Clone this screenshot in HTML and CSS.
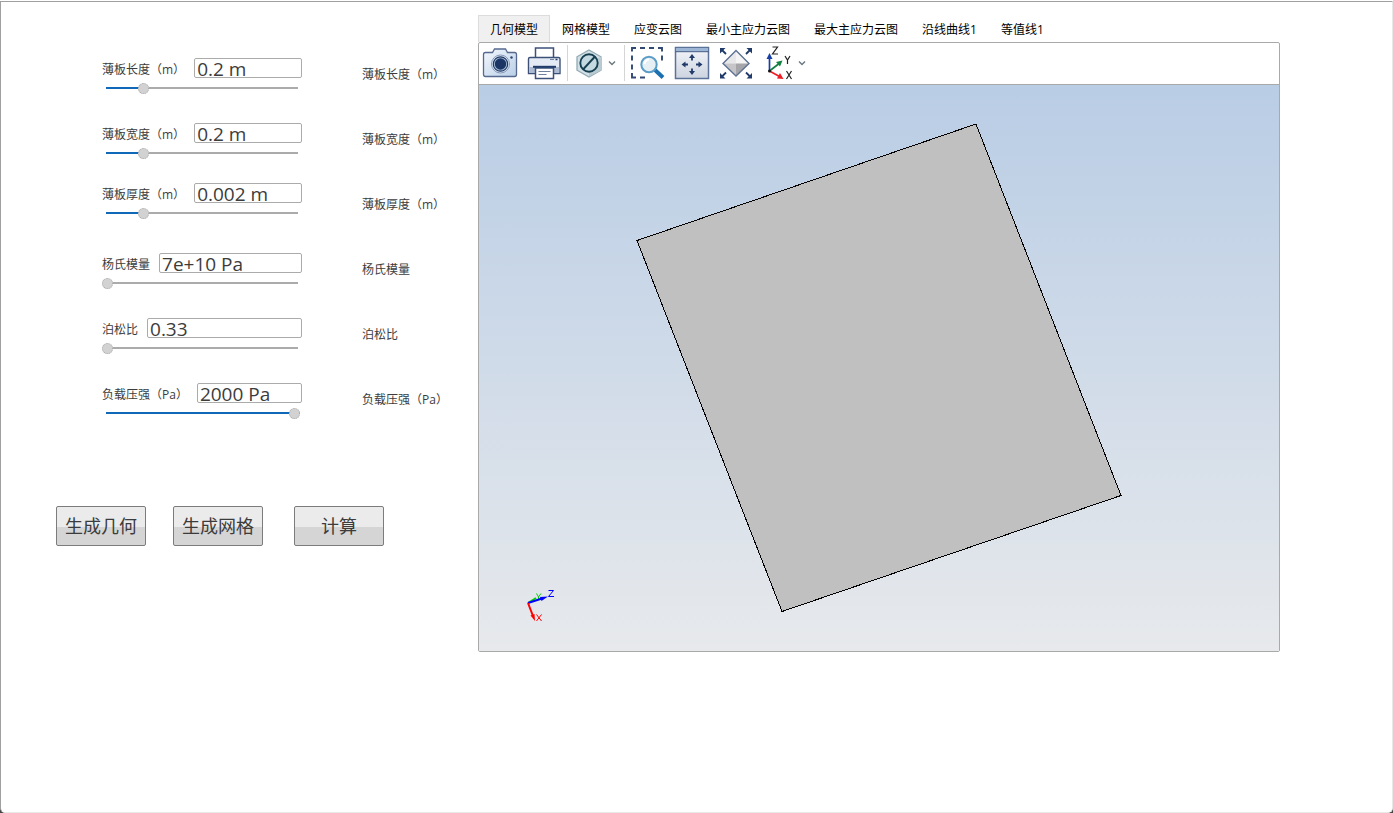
FILE: index.html
```html
<!DOCTYPE html>
<html lang="zh-CN">
<head>
<meta charset="utf-8">
<title>薄板分析</title>
<link rel="stylesheet" href="styles.css">
</head>
<body>
<main class="window">
  <section class="side">
    <form class="params">
      <div class="fields">
        <div class="field">
          <div class="entry"><label for="length">薄板长度（m）</label><input class="value" id="length" type="text" value="0.2 m"></div>
          <input class="slider" type="range" aria-label="薄板长度" value="19" style="--fill:19%">
        </div>
        <div class="field">
          <div class="entry"><label for="width">薄板宽度（m）</label><input class="value" id="width" type="text" value="0.2 m"></div>
          <input class="slider" type="range" aria-label="薄板宽度" value="19" style="--fill:19%">
        </div>
        <div class="field field-last">
          <div class="entry"><label for="thickness">薄板厚度（m）</label><input class="value" id="thickness" type="text" value="0.002 m"></div>
          <input class="slider" type="range" aria-label="薄板厚度" value="19" style="--fill:19%">
        </div>
        <div class="field">
          <div class="entry"><label for="modulus">杨氏模量</label><input class="value" id="modulus" type="text" value="7e+10 Pa"></div>
          <input class="slider" type="range" aria-label="杨氏模量" value="0" style="--fill:0%">
        </div>
        <div class="field">
          <div class="entry"><label for="poisson">泊松比</label><input class="value" id="poisson" type="text" value="0.33"></div>
          <input class="slider" type="range" aria-label="泊松比" value="0" style="--fill:0%">
        </div>
        <div class="field">
          <div class="entry"><label for="pressure">负载压强（Pa）</label><input class="value" id="pressure" type="text" value="2000 Pa"></div>
          <input class="slider" type="range" aria-label="负载压强" value="100" style="--fill:100%">
        </div>
      </div>
      <ul class="names">
        <li>薄板长度（m）</li>
        <li>薄板宽度（m）</li>
        <li>薄板厚度（m）</li>
        <li>杨氏模量</li>
        <li>泊松比</li>
        <li>负载压强（Pa）</li>
      </ul>
    </form>
    <div class="actions">
      <button class="action" type="button">生成几何</button>
      <button class="action" type="button">生成网格</button>
      <button class="action action-run" type="button">计算</button>
    </div>
  </section>

  <section class="viewer">
    <div class="tabs" role="tablist">
      <button class="tab tab-active" type="button" role="tab" aria-selected="true">几何模型</button>
      <button class="tab" type="button" role="tab">网格模型</button>
      <button class="tab" type="button" role="tab">应变云图</button>
      <button class="tab" type="button" role="tab">最小主应力云图</button>
      <button class="tab" type="button" role="tab">最大主应力云图</button>
      <button class="tab" type="button" role="tab">沿线曲线1</button>
      <button class="tab" type="button" role="tab">等值线1</button>
    </div>
    <div class="pane">
      <div class="toolbar">
        <div class="group group-output">
          <button class="tool" type="button" aria-label="截图">
            <svg class="icon" viewBox="0 0 36 36">
              <defs><linearGradient id="cam" x1="0" y1="0" x2="1" y2="1"><stop offset="0" stop-color="#f4f8fd"/><stop offset="1" stop-color="#b9cfe8"/></linearGradient></defs>
              <path d="M3.500 7.500h7l2-3.500h11l2 3.500h7q2 0 2 2v20q0 2-2 2h-29q-2 0-2-2v-20q0-2 2-2z" fill="url(#cam)" stroke="#56698f" stroke-width="1.300"/>
              <circle cx="18.500" cy="19" r="9" fill="#e5eef8" stroke="#8295b5"/>
              <circle cx="18.500" cy="19" r="7.200" fill="#a9c0dc" stroke="#1d3763" stroke-width="1.200"/>
              <circle cx="18.500" cy="19" r="5.700" fill="#1b3564"/>
              <circle cx="29.500" cy="12.500" r="1.200" fill="#2a4474"/>
            </svg>
          </button>
          <button class="tool" type="button" aria-label="打印">
            <svg class="icon" viewBox="0 0 36 36">
              <path d="M9.500 13V3h18v10" fill="#fff" stroke="#3c5078" stroke-width="1.500"/>
              <path d="M4 12.500h28.500q1.500 0 1.500 1.500v14.500H2.500V14q0-1.500 1.500-1.500z" fill="#e5ebf4" stroke="#3c5078" stroke-width="1.400"/>
              <path d="M3.200 22h30v6h-30z" fill="#aebcd3"/>
              <path d="M9.500 23h18v10.500h-18z" fill="#fff" stroke="#3c5078" stroke-width="1.500"/>
              <path d="M7 21.800h23" stroke="#203c6b" stroke-width="2"/>
              <path d="M12.500 26.500h12M12.500 29.500h8M24 14.500h4" stroke="#6f80a0" stroke-width="1.200"/>
              <path d="M29.500 14.500h2" stroke="#203c6b" stroke-width="1.500"/>
            </svg>
          </button>
        </div>
        <div class="group group-display">
          <button class="tool" type="button" aria-label="显示方式">
            <svg class="icon" viewBox="0 0 36 36">
              <path d="M18 5l12 6.800v13.400L18 32 6 25.200V11.800z" fill="#d3e0e5" stroke="#91aab4" stroke-width="1.300"/>
              <path d="M18 31.500V18.500l12-6.700v13.400z" fill="#b9cbd2"/>
              <circle cx="18" cy="18" r="8.700" fill="#c5dae0" stroke="#173f52" stroke-width="1.900"/>
              <path d="M12 24.500l12-13" stroke="#173f52" stroke-width="1.900"/>
            </svg>
            <svg class="chevron" viewBox="0 0 8 8"><path d="M1 2.500l3 3 3-3" fill="none" stroke="#6c7a80" stroke-width="1.500"/></svg>
          </button>
        </div>
        <div class="group">
          <button class="tool" type="button" aria-label="框选缩放">
            <svg class="icon" viewBox="0 0 36 36">
              <path d="M2 6.500V3h4M10 3h5M19 3h5M28 3h4v3.500M2 10.500v5M2 19.500v5M2 28v4.500h4M10 32.500h5M32 10.500v5" fill="none" stroke="#304873" stroke-width="1.900"/>
              <path d="M25 25l8 7.500" stroke="#1b70b0" stroke-width="4"/>
              <circle cx="19" cy="19.500" r="7.700" fill="#e6eff4" stroke="#5b9dc6" stroke-width="2"/>
              <path d="M14.500 19q.500-4 4.500-4.500" fill="none" stroke="#fff" stroke-width="2"/>
            </svg>
          </button>
          <button class="tool" type="button" aria-label="平移">
            <svg class="icon" viewBox="0 0 36 36">
              <defs><linearGradient id="pan" x1="0" y1="0" x2="0" y2="1"><stop offset="0" stop-color="#f3f5f9"/><stop offset="1" stop-color="#cdd4e0"/></linearGradient></defs>
              <path d="M1.500 2.500h33v31h-33z" fill="url(#pan)" stroke="#5c7399" stroke-width="1.500"/>
              <path d="M2 3h32v3.200H2z" fill="#9db6d6"/><path d="M1.500 6.700h33" stroke="#3e5782"/>
              <path d="M18 15.500V12M18 23.500v4M14 19.500h-4M22 19.500h4" stroke="#213b6a" stroke-width="1.800"/>
              <path d="M18 9l3 4h-6zM18 30l3-4h-6zM7.500 19.500l4-3v6zM28.500 19.500l-4-3v6z" fill="#213b6a"/>
            </svg>
          </button>
          <button class="tool" type="button" aria-label="适合窗口">
            <svg class="icon" viewBox="0 0 36 36">
              <path d="M18 5.500L31 18.500l-13 12-13-12z" fill="#f5f5f5"/>
              <path d="M18 5.500v13H5z" fill="#e8e8ea"/>
              <path d="M5 18.500h13v12z" fill="#c6c6c9"/><path d="M18 18.500h13l-13 12z" fill="#a5a5aa"/>
              <path d="M18 5.500L31 18.500l-13 12.500L5 18.500z" fill="none" stroke="#5e7194" stroke-width="1.400"/>
              <path d="M3.500 4.500L8 9M32.500 4.500L28 9M3.500 32L8 27.500M32.500 32L28 27.500" stroke="#213b6a" stroke-width="1.800"/>
              <path d="M2 3h5.500L2 8.500zM34 3h-5.500l5.500 5.500zM2 33.500h5.500L2 28zM34 33.500h-5.500l5.500-5.500z" fill="#213b6a"/>
            </svg>
          </button>
          <button class="tool" type="button" aria-label="视图方向">
            <svg class="icon" viewBox="0 0 36 36">
              <path d="M7.500 26V13" stroke="#1740a8" stroke-width="1.700"/><path d="M7.500 8l3 6h-6z" fill="#1740a8"/>
              <path d="M7.500 26l9-7" stroke="#128040" stroke-width="1.700"/><path d="M20.500 15.500l-2.500 6-4-4.500z" fill="#128040"/>
              <path d="M7.500 26l10 5.500" stroke="#ee1c24" stroke-width="1.700"/><path d="M21.500 34l-6.500-.5 3-5.500z" fill="#ee1c24"/>
              <circle cx="7.500" cy="26" r="1.500" fill="#111"/>
              <path d="M10.500 2h5l-5 7h5.500M23 11l2.500 4 2.500-4M25.500 15v4M24.500 26l5 8M29.500 26l-5 8" fill="none" stroke="#222" stroke-width="1.200"/>
            </svg>
            <svg class="chevron" viewBox="0 0 8 8"><path d="M1 2.500l3 3 3-3" fill="none" stroke="#6c7a80" stroke-width="1.500"/></svg>
          </button>
        </div>
      </div>
      <svg class="scene" viewBox="0 0 800 566" role="img" aria-label="薄板几何模型">
        <path d="M158 155.500L497 39l145 371.500L303 526.500z" fill="#c0c0c0" stroke="#000" shape-rendering="crispEdges"/>
        <path d="M49 518l8-5" stroke="#0c0" stroke-width="2"/>
        <path d="M57.500 508.500l2 3.500 2.500-3.500M59.500 512v3" fill="none" stroke="#00d000"/>
        <path d="M49 518l14-4.500" stroke="#00f" stroke-width="2"/><path d="M69 511.500l-8 .500 1.500 4z" fill="#00f"/>
        <path d="M49 518l5 13" stroke="#f00" stroke-width="2"/><path d="M56 536l-4.500-5.500 4-1.500z" fill="#f00"/>
        <path d="M69.500 505.500h5l-5 6h5.500" fill="none" stroke="#00f"/>
        <path d="M57.500 529.500l5 6.500M62.500 529.500l-5 6.500" stroke="#f00"/>
      </svg>
    </div>
  </section>
</main>
</body>
</html>
```
FILE: styles.css
```css
* {
  box-sizing: border-box;
}

html {
  background: linear-gradient(#fff 50%, #444 50%);
}

body {
  margin: 0;
  padding-top: 1px;
  color: #3c3c3c;
  font: 12px/16px "Open Sans", "Noto Sans CJK SC", sans-serif;
}

button,
input {
  font-family: inherit;
}

.window {
  display: grid;
  grid-template-columns: 477px minmax(0, 1fr);
  align-items: start;
  min-height: calc(100vh - 1px);
  padding-right: 112px;
  border: 1px solid #a0a0a0;
  border-right-color: #e8e8e8;
  border-bottom-color: #e8e8e8;
  border-radius: 0 0 5px 5px;
  background: #fff;
}

.side {
  padding: 56px 0 0 55px;
}

.params {
  display: flex;
  gap: 60px;
  padding-left: 46px;
}

.fields {
  display: flex;
  flex-direction: column;
  width: 200px;
}

.field {
  height: 65px;
}

.field:nth-child(2) {
  height: 60px;
}

.field-last {
  height: 70px;
}

.entry {
  display: flex;
  align-items: center;
  gap: 9px;
  height: 20px;
}

.entry label {
  white-space: nowrap;
  padding-top: 4px;
}

.value {
  flex: 1;
  min-width: 0;
  height: 20px;
  padding: 2px 2px 0;
  border: 1px solid #ababab;
  border-radius: 2px;
  background: #fff;
  color: #3c3c3c;
  font-size: 19px;
  line-height: 18px;
}

.slider {
  appearance: none;
  display: block;
  width: 198px;
  height: 12px;
  margin: 4px 0 0;
  background:
    linear-gradient(#0f68b8, #0f68b8) 4px 5px / calc(var(--fill) - 4px) 2px no-repeat,
    linear-gradient(#ababab, #ababab) 4px 5px / 192px 2px no-repeat;
}

.slider::-webkit-slider-thumb {
  appearance: none;
  width: 11px;
  height: 11px;
  border: 1px dotted #aaa;
  border-radius: 50%;
  background: #d2d2d2;
}

.names {
  margin: 0;
  padding: 9px 0 0;
  list-style: none;
}

.names li {
  height: 65px;
}

.actions {
  display: flex;
  gap: 27px;
  padding-top: 49px;
}

.action {
  width: 90px;
  height: 40px;
  padding: 0;
  border: 1px solid #7c7c7c;
  border-radius: 2px;
  background: linear-gradient(#ebebeb 52%, #d5d5d5 52%);
  color: #3c3c3c;
  font-size: 18px;
  line-height: 24px;
}

.action-run {
  margin-left: 4px;
}

.viewer {
  padding-top: 13px;
}

.tabs {
  display: flex;
}

.tab {
  height: 27px;
  padding: 2px 12px 0;
  border: 0;
  background: none;
  color: #000;
  font-size: 12px;
  line-height: 16px;
  white-space: nowrap;
}

.tab-active {
  padding: 1px 11px 0;
  border: 1px solid #dcdcdc;
  border-bottom: 0;
  background: #f0f0f0;
}

.pane {
  border: 1px solid #a9a9a9;
  border-radius: 2px;
}

.toolbar {
  display: flex;
  align-items: center;
  height: 42px;
  padding: 0 0 1px 3px;
  border-bottom: 1px solid #a9a9a9;
}

.group {
  display: flex;
  align-items: center;
  gap: 8px;
  height: 36px;
  padding-left: 5px;
}

.group-output {
  padding: 0 5px 0 0;
  border-right: 1px solid #d5d5d5;
}

.group-display {
  padding: 0 8px 0 3px;
  border-right: 1px solid #d5d5d5;
}

.group-display .tool {
  gap: 1px;
}

.tool {
  display: flex;
  align-items: center;
  padding: 0;
  border: 0;
  background: none;
}

.icon {
  width: 36px;
  height: 36px;
}

.chevron {
  width: 8px;
  height: 8px;
}

.scene {
  display: block;
  width: 100%;
  height: auto;
  background: linear-gradient(#b9cde5, #e7e9ec);
}
```
